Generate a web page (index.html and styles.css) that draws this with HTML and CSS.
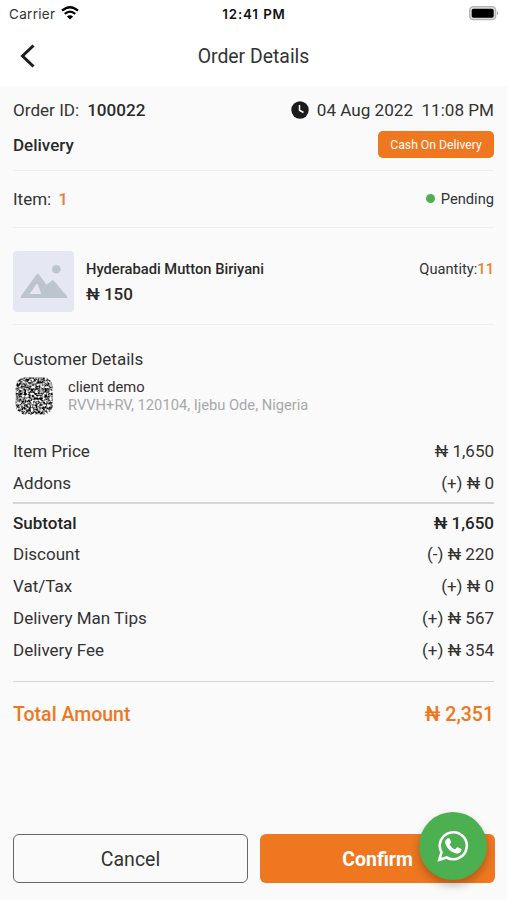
FILE: index.html
```html
<!DOCTYPE html>
<html lang="en">
<head>
<meta charset="utf-8">
<title>Order Details</title>
<link rel="stylesheet" href="styles.css">
</head>
<body>
<div class="app">
  <header class="status">
    <div class="carrier"><span>Carrier</span>
      <svg width="18" height="14" viewBox="0 0 18 14" fill="none" stroke="#000" stroke-width="2.3"><path d="M1 4.7Q9-2.3 17 4.7M3.8 7.8q5.2-4.4 10.4 0"/><path d="M9 13.6 5.9 10.4q3.1-2.4 6.2 0Z" fill="#000" stroke="none"/></svg>
    </div>
    <span class="clock">12:41 PM</span>
    <svg class="battery" width="30" height="15" viewBox="0 0 30 15"><rect x=".7" y=".7" width="26" height="13" rx="3.6" fill="#ddd" stroke="#b4b4b4" stroke-width="1.3"/><rect x="2.7" y="2.7" width="22" height="9" rx="1.8"/><path d="M28 5q2 2.200 0 4.500Z" fill="#999"/></svg>
  </header>
  <nav class="bar">
    <svg class="back" width="16" height="24" viewBox="0 0 16 24" fill="none" stroke="#1c1c1c" stroke-width="3"><path d="M13.500 1.500 2.500 12l11 10.500"/></svg>
    <h1>Order Details</h1>
  </nav>
  <main>
    <div class="row order"><span><span class="t-id">Order ID:</span><b class="t-num">100022</b></span>
      <span class="when"><svg width="18" height="18" viewBox="0 0 18 18"><circle cx="9" cy="9" r="8.700" fill="#1b1b1b"/><path d="M8.500 4v5.200l4 2.300" fill="none" stroke="#fafafa" stroke-width="1.500"/></svg><span class="t-date">04 Aug 2022&nbsp; 11:08 PM</span></span>
    </div>
    <div class="row type"><b class="t-type">Delivery</b><span class="tag"><span>Cash On Delivery</span></span></div>
    <div class="row items"><span class="t-item">Item:<b class="accent">1</b></span><span class="state"><i></i><span>Pending</span></span></div>
    <section class="product">
      <svg class="thumb" width="61" height="61" viewBox="0 0 61 61"><rect width="61" height="61" rx="4" fill="#e5e8f3"/><circle cx="43.300" cy="18.300" r="4.300" fill="#bcc4cd"/><path fill-rule="evenodd" fill="#bcc4cd" stroke="#bcc4cd" stroke-width="2.400" stroke-linejoin="round" d="M9 45.800 24.700 24 33.500 35.500 39.800 30.500 53 45.800ZM14.500 44.200h15.500L24.500 29.500Z"/></svg>
      <div class="info"><b class="name">Hyderabadi Mutton Biriyani</b><b class="price">₦ 150</b></div>
      <span class="qty">Quantity:<b class="accent">11</b></span>
    </section>
    <h2>Customer Details</h2>
    <section class="customer">
      <svg class="avatar" width="38" height="38" viewBox="0 0 38 38">
        <filter id="grain" x="0" y="0" width="100%" height="100%" color-interpolation-filters="sRGB"><feTurbulence type="fractalNoise" baseFrequency=".43" numOctaves="2" seed="8"/><feColorMatrix values="2.500 0 0 0 -.75 2.500 0 0 0 -.75 2.500 0 0 0 -.75 0 0 0 0 1"/></filter>
        <clipPath id="round"><rect x=".7" y=".5" width="37" height="37" rx="9"/></clipPath>
        <g clip-path="url(#round)"><rect width="38" height="38" filter="url(#grain)"/></g>
      </svg>
      <div class="who"><span class="client">client demo</span><span class="address">RVVH+RV, 120104, Ijebu Ode, Nigeria</span></div>
    </section>
    <section class="bill">
      <div class="row"><span>Item Price</span><span>₦ 1,650</span></div>
      <div class="row"><span>Addons</span><span>(+) ₦ 0</span></div>
      <hr>
      <div class="row strong"><span>Subtotal</span><span>₦ 1,650</span></div>
      <div class="row"><span>Discount</span><span>(-) ₦ 220</span></div>
      <div class="row"><span>Vat/Tax</span><span>(+) ₦ 0</span></div>
      <div class="row"><span>Delivery Man Tips</span><span>(+) ₦ 567</span></div>
      <div class="row"><span>Delivery Fee</span><span>(+) ₦ 354</span></div>
      <hr class="last">
      <div class="row total"><span>Total Amount</span><span>₦ 2,351</span></div>
    </section>
  </main>
  <footer>
    <button class="cancel">Cancel</button>
    <button class="confirm">Confirm</button>
    <div class="fab"><svg width="32" height="32" viewBox="0 0 32 32"><path d="M2.300 29.700 4.500 22.300A13.500 13.500 0 1 1 9.700 27.500Z" fill="none" stroke="#fff" stroke-width="2.600"/><path fill="#fff" d="M10.300 8.600q1.800-1.100 2.600.5l1.200 2.900q.2.600-1.500 2.500 1.900 3.500 5.500 5l1.700-2q.5-.5 1.200-.1l2.900 1.400q.8.300.5 1.500-.9 3.500-4.800 3.200-5.700-.9-9.500-6.300-4.200-5.700.2-8.600Z"/></svg></div>
  </footer>
</div>
</body>
</html>
```
FILE: styles.css
```css
* { box-sizing: border-box; }
body { margin: 0; background: #fafafa; font-family: Roboto, "Liberation Sans", sans-serif; color: #333; }
b { font-weight: 500; color: #2a2a2a; }
h1, h2 { margin: 0; font-weight: 400; }
.app { width: 507px; height: 900px; display: flex; flex-direction: column; overflow: hidden; }
.status { height: 28px; background: #fff; display: grid; grid-template-columns: 1fr auto 1fr; align-items: center; padding: 0 8px 1px 9px; font-family: Inter, sans-serif; font-size: 13.500px; }
.carrier { display: flex; align-items: center; gap: 6px; letter-spacing: .3px; }
.carrier svg { margin-top: -2px; }
.clock { font-weight: 600; color: #111; letter-spacing: .9px; font-size: 13.300px; }
.battery { justify-self: end; }
.bar { height: 58px; background: #fff; display: grid; grid-template-columns: 1fr auto 1fr; align-items: center; padding: 0 20px 2px; }
h1 { font-size: 19.400px; padding-top: 1px; }
main { flex: 1; padding: 7px 13px 0; }
.row { display: flex; justify-content: space-between; align-items: center; }
.order { height: 33px; font-size: 17.100px; }
.t-num { margin-left: 8px; }
.when { display: flex; align-items: center; gap: 8px; }
.type { height: 45px; padding-bottom: 7px; border-bottom: 1px solid #efefef; font-size: 17px; }
.tag { width: 116px; height: 27px; border-radius: 5px; background: #ee7720; color: #fff; font-size: 12.200px; display: flex; align-items: center; justify-content: center; }
.items { height: 57px; padding-bottom: 1px; border-bottom: 1px solid #efefef; font-size: 17px; }
.accent { color: #ee7d30; }
.items .accent { margin-left: 7px; }
.state { display: flex; align-items: center; gap: 6px; font-size: 14.700px; }
.state i { width: 9px; height: 9px; border-radius: 50%; background: #4caf50; }
.product { height: 97px; display: flex; padding-top: 23px; border-bottom: 1px solid #efefef; }
.info { margin-left: 12px; display: flex; flex-direction: column; padding-top: 8px; flex: 1; }
.name { font-size: 14.700px; line-height: 20px; }
.price { font-size: 17px; line-height: 30px; }
.qty { font-size: 14.700px; line-height: 20px; padding-top: 8px; }
h2 { font-size: 17px; line-height: 24px; margin-top: 22px; }
.customer { display: flex; margin: 5px 0 0 2px; height: 40px; gap: 15px; }
.avatar { margin-top: 1px; }
.who { display: flex; flex-direction: column; font-size: 14.700px; line-height: 17.500px; padding-top: 3px; }
.address { color: #a6a9ab; }
.bill { margin-top: 19.600px; font-size: 17px; }
.bill .row { height: 31.800px; }
hr { margin: 3px 0 3px; border: 0; height: 1.500px; background: #d6d6d6; }
.last { margin: 15px 0 17px; height: 1.400px; }
.strong { font-weight: 500; color: #252525; }
.bill .total { font-size: 19.500px; font-weight: 500; color: #ee7720; }
footer { position: relative; display: grid; grid-template-columns: 1fr 1fr; gap: 12px; height: 66px; padding: 0 12px 17px 13px; }
button { height: 49px; border-radius: 6px; font-family: Roboto, sans-serif; font-size: 19.500px; padding: 1px 0 0; }
.cancel { background: #fafafa; border: 1.500px solid #666; color: #333; }
.confirm { background: #ee7720; border: 0; color: #fff; font-weight: 700; }
.fab { position: absolute; right: 20px; top: -22px; width: 68px; height: 68px; border-radius: 50%; background: #4caf50; display: flex; align-items: center; justify-content: center; box-shadow: 0 5px 8px rgba(0,0,0,.25); }
```
